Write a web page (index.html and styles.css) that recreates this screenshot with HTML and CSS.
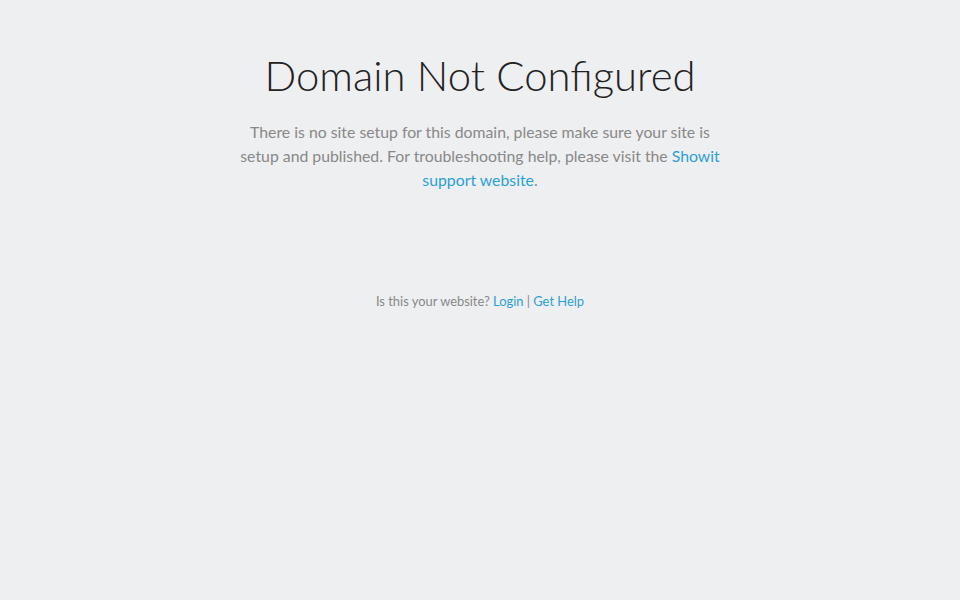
FILE: index.html
```html
<!DOCTYPE html>
<html>
<head>
<meta charset="utf-8">
<link rel="stylesheet" href="styles.css">
</head>
<body>
<main class="page">
  <h1 class="title">Domain Not Configured</h1>
  <p class="message">There is no site setup for this domain, please make sure your site is setup and published. For troubleshooting help, please visit the <a href="#">Showit support website</a>.</p>
  <p class="footer">Is this your website? <a href="#">Login</a> | <a href="#">Get Help</a></p>
</main>
</body>
</html>
```
FILE: styles.css
```css
html, body {
  margin: 0;
  padding: 0;
  height: 100%;
  background: #eeeff1;
}
body {
  font-family: Lato, "Open Sans", sans-serif;
  color: #888;
}
.page {
  display: flex;
  flex-direction: column;
  align-items: center;
  text-align: center;
  padding-top: 50px;
}
.title {
  margin: 0;
  font-weight: 300;
  font-size: 41.8px;
  line-height: 50px;
  color: #222;
}
.message {
  margin: 20px 0 0;
  width: 484px;
  font-size: 15.8px;
  line-height: 24px;
  color: #888;
}
.footer {
  margin: 100px 0 0;
  font-size: 12.9px;
  line-height: 18px;
  color: #888;
}
a {
  color: #2b9fd3;
  text-decoration: none;
}
```
